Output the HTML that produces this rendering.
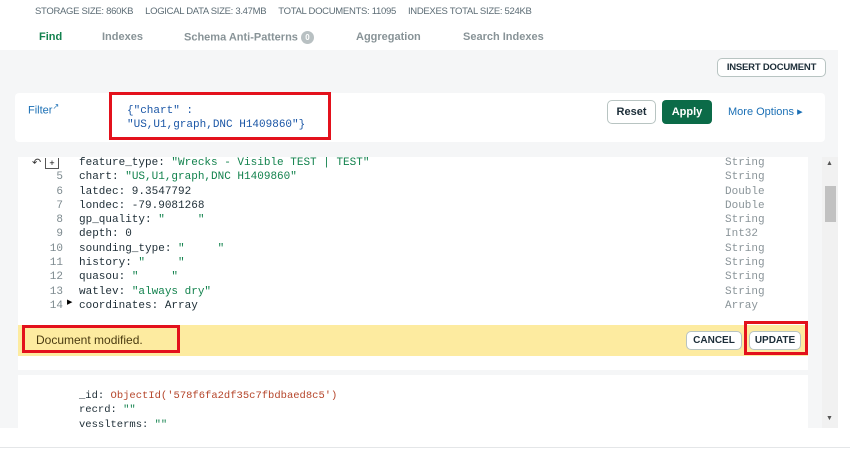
<!DOCTYPE html>
<html><head><style>
*{margin:0;padding:0;box-sizing:border-box}
body{width:850px;height:468px;overflow:hidden;background:#fff;font-family:"Liberation Sans",sans-serif;position:relative}
.abs{position:absolute}
.stats{top:6px;left:35px;font-size:9.5px;color:#5c6c75;letter-spacing:-0.3px;white-space:nowrap}
.stats span{margin-right:12px}
.tab{top:31px;font-size:11px;font-weight:bold;color:#889397}
.grey{left:0;top:50px;width:838px;height:378px;background:#f5f6f7}
.btn{border:1px solid #b8c4c2;border-radius:5px;background:#fff;font-size:10px;font-weight:bold;color:#1c2d38;text-align:center;white-space:nowrap}
.mono{font-family:"Liberation Mono",monospace;font-size:11px}
.code div{height:14.3px;line-height:14.3px;white-space:pre}
.ln{color:#7d8a8f;display:inline-block;width:26px;text-align:right;margin-right:16px}
.s{color:#12824d}
.red{border:3px solid #e3111c}
</style></head><body>
<div class="abs stats"><span>STORAGE SIZE: 860KB</span><span>LOGICAL DATA SIZE: 3.47MB</span><span>TOTAL DOCUMENTS: 11095</span><span>INDEXES TOTAL SIZE: 524KB</span></div>
<div class="abs tab" style="left:39px;color:#13814e">Find</div>
<div class="abs tab" style="left:102px">Indexes</div>
<div class="abs tab" style="left:184px">Schema Anti-Patterns <span style="display:inline-block;width:13px;height:13px;border-radius:7px;background:#b8c0c2;color:#fff;font-size:8px;text-align:center;line-height:13px;vertical-align:middle">0</span></div>
<div class="abs tab" style="left:356px">Aggregation</div>
<div class="abs tab" style="left:463px">Search Indexes</div>
<div class="abs grey"></div>
<div class="abs btn" style="left:717px;top:58px;width:109px;height:19px;line-height:17px;font-size:9.5px;letter-spacing:-0.2px">INSERT DOCUMENT</div>
<div class="abs" style="left:15px;top:93px;width:810px;height:49px;background:#fff;border-radius:4px"></div>
<div class="abs" style="left:28px;top:102px;font-size:11px;color:#1a6fb5">Filter<sup style="font-size:8px">&#x2197;</sup></div>
<div class="abs red" style="left:109px;top:92px;width:222px;height:48px"></div>
<div class="abs mono" style="left:127px;top:104px;color:#1a56a6;line-height:14px">{"chart" :<br>"US,U1,graph,DNC H1409860"}</div>
<div class="abs btn" style="left:607px;top:100px;width:49px;height:24px;line-height:22px;font-size:11px">Reset</div>
<div class="abs" style="left:662px;top:100px;width:50px;height:24px;line-height:24px;background:#0b6b48;border-radius:4px;color:#fff;font-size:11px;font-weight:bold;text-align:center">Apply</div>
<div class="abs" style="left:728px;top:105px;font-size:11px;color:#1a6fb5">More Options &#9656;</div>
<div class="abs" style="left:18px;top:157px;width:790px;height:213px;background:#fff"></div>
<div class="abs" style="left:18px;top:375px;width:790px;height:53px;background:#fff"></div>
<div class="abs" style="left:822px;top:157px;width:16px;height:271px;background:#f1f1f1"></div>
<div class="abs" style="left:825px;top:186px;width:11px;height:36px;background:#c1c1c1"></div>
<div class="abs" style="left:826px;top:160px;font-size:7px;color:#555">&#9650;</div>
<div class="abs" style="left:826px;top:415px;font-size:7px;color:#555">&#9660;</div>
<div class="abs" style="left:32px;top:156px;font-size:11px;color:#333">&#8630;</div>
<div class="abs" style="left:45px;top:158px;width:14px;height:11px;border:1px solid #555;border-top:none;font-size:9px;text-align:center;line-height:10px">+</div>
<div class="abs mono code" style="left:37px;top:156px;color:#1d2d36">
<div><span class="ln"> </span>feature_type: <span class="s">"Wrecks - Visible TEST | TEST"</span></div>
<div><span class="ln">5</span>chart: <span class="s">"US,U1,graph,DNC H1409860"</span></div>
<div><span class="ln">6</span>latdec: 9.3547792</div>
<div><span class="ln">7</span>londec: -79.9081268</div>
<div><span class="ln">8</span>gp_quality: <span class="s">"     "</span></div>
<div><span class="ln">9</span>depth: 0</div>
<div><span class="ln">10</span>sounding_type: <span class="s">"     "</span></div>
<div><span class="ln">11</span>history: <span class="s">"     "</span></div>
<div><span class="ln">12</span>quasou: <span class="s">"     "</span></div>
<div><span class="ln">13</span>watlev: <span class="s">"always dry"</span></div>
<div><span class="ln">14</span>coordinates: Array</div>
</div>
<div class="abs" style="left:67px;top:298px;font-size:7px">&#9654;</div>
<div class="abs mono code" style="left:725px;top:156px;color:#8a9499">
<div>String</div><div>String</div><div>Double</div><div>Double</div><div>String</div><div>Int32</div><div>String</div><div>String</div><div>String</div><div>String</div><div>Array</div>
</div>
<div class="abs" style="left:18px;top:325px;width:790px;height:31px;background:#fdeba0"></div>
<div class="abs red" style="left:22px;top:325px;width:158px;height:28px"></div>
<div class="abs" style="left:36px;top:333px;font-size:12px;color:#4a3b10">Document modified.</div>
<div class="abs btn" style="left:686px;top:331px;width:56px;height:19px;line-height:17px">CANCEL</div>
<div class="abs red" style="left:744px;top:321px;width:64px;height:34px"></div>
<div class="abs btn" style="left:749px;top:331px;width:52px;height:19px;line-height:17px">UPDATE</div>
<div class="abs mono code" style="left:79px;top:389px;color:#1d2d36;font-size:10.5px">
<div>_id: <span style="color:#b5452a">ObjectId('578f6fa2df35c7fbdbaed8c5')</span></div>
<div>recrd: <span class="s">""</span></div>
<div>vesslterms: <span class="s">""</span></div>
</div>
<div class="abs" style="left:0;top:428px;width:850px;height:40px;background:#fff"></div>
<div class="abs" style="left:0;top:447px;width:850px;height:1px;background:#e4e6e8"></div>
</body></html>
